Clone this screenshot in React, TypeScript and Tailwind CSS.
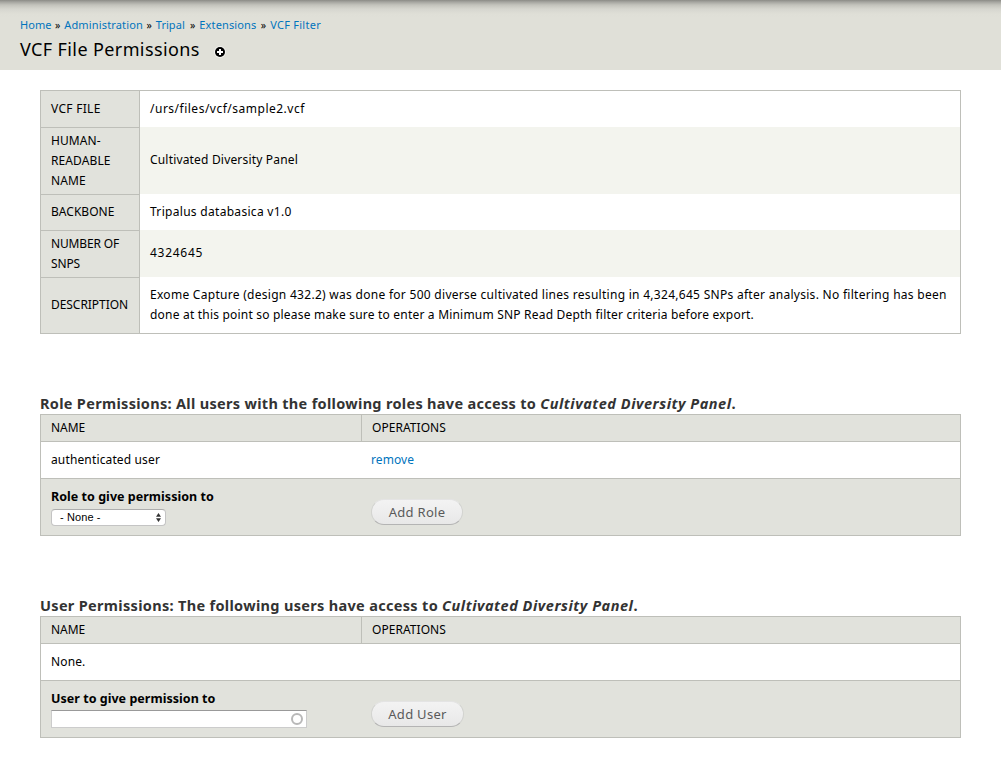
import type { ReactNode } from "react";

const crumbs = [
  { label: "Home", cls: "w-[31px]" },
  { label: "Administration", cls: "w-[78.4px] tracking-[0.16px]" },
  { label: "Tripal", cls: "w-[30.4px]" },
  { label: "Extensions", cls: "w-[57.6px] tracking-[0.13px]" },
  { label: "VCF Filter", cls: "w-[54px] tracking-[0.28px]" },
];

function Breadcrumb() {
  return (
    <nav className="flex h-[14px] items-center whitespace-nowrap text-[11px] leading-[14px] tracking-[0.05px]">
      {crumbs.map((c, i) => (
        <span key={c.label} className="flex">
          {i > 0 && <span className="w-[13.2px] text-center text-[10.5px] text-black">»</span>}
          <a className={`${c.cls} text-[#0074bd]`}>{c.label}</a>
        </span>
      ))}
    </nav>
  );
}

function InfoRow({ h, label, first, striped, children }: { h: string; label: ReactNode; first?: boolean; striped?: boolean; children: ReactNode }) {
  return (
    <div className={`flex ${h} ${striped ? "bg-[#f3f4ee]" : "bg-white"}`}>
      <div className={`flex w-[99px] shrink-0 items-center whitespace-nowrap border-r border-[#bebfb9] bg-[#e1e2dc] pl-[10px] ${first ? "" : "border-t pb-px"}`}>
        <div>{label}</div>
      </div>
      <div className={`flex items-center whitespace-nowrap pl-[10px] ${striped ? "pb-[2px]" : ""}`}>
        <div>{children}</div>
      </div>
    </div>
  );
}

function PermissionTable({ row, op, label, field, button }: { row: string; op?: string; label: ReactNode; field: ReactNode; button: ReactNode }) {
  return (
    <div className="h-[122px] w-[921px] border border-[#bebfb9] whitespace-nowrap">
      <div className="flex h-[27px] border-b border-[#bebfb9] bg-[#e1e2dc]">
        <div className="w-[321px] border-r border-[#bebfb9] pl-[10px] leading-[25px] tracking-[-0.05px]">NAME</div>
        <div className="pl-[10px] leading-[25px] tracking-[0.05px]">OPERATIONS</div>
      </div>
      <div className="flex h-[37px] border-b border-[#bebfb9] bg-white leading-[35px]">
        <div className="w-[320px] pl-[10px] tracking-[0.14px]">{row}</div>
        <div className="pl-[10px] tracking-[0.1px] text-[#0074bd]">{op}</div>
      </div>
      <div className="flex h-[56px] bg-[#e1e2dc]">
        <div className="w-[330px] pl-[10px] pt-[8px]">
          <div className="h-[20px] text-[12.5px] font-bold leading-[20px] tracking-[0.03px]">{label}</div>
          {field}
        </div>
        <div className="pt-[20px]">{button}</div>
      </div>
    </div>
  );
}

function PillButton({ children, w }: { children: ReactNode; w: string }) {
  return (
    <button className={`block h-[26px] ${w} rounded-full border border-[#e4e4e4] border-b-[#b4b4b4] border-l-[#d2d3d0] border-r-[#d2d3d0] bg-linear-to-b from-[#f3f3f3] to-[#e8e8e8] text-center text-[13px] leading-[23px] tracking-[0.3px] text-[#5a5a5a]`}>
      {children}
    </button>
  );
}

export default function App() {
  return (
    <div className="h-[780px] w-[1001px] overflow-hidden bg-white font-['Noto_Sans',sans-serif] text-[12px] leading-[20px] text-black">
      <header className="h-[70px] bg-[#e0e0d8] bg-[linear-gradient(to_bottom,#8b8b86_0px,#a5a5a0_2px,#c3c3bc_5px,#d6d6cf_9px,#dfdfd7_14px,#e0e0d8_18px)] pl-[20px] pt-[18px]">
        <Breadcrumb />
        <div className="flex h-[34px] items-center">
          <h1 className="w-[194px] whitespace-nowrap text-[18px] leading-[34px] tracking-[0.39px]">VCF File Permissions</h1>
          <svg className="mt-[5px]" width="12" height="12" viewBox="0 0 12 12">
            <circle cx="6" cy="6" r="6" fill="#f2f2ee" />
            <circle cx="6" cy="6" r="5" fill="#000" />
            <path d="M6 3v6M3 6h6" stroke="#fff" strokeWidth="2" />
          </svg>
        </div>
      </header>

      <main className="pl-[40px] pt-[20px]">
        <div className="w-[921px] border border-[#bebfb9] tracking-[0.3px]">
          <InfoRow first h="h-[36px]" label={<span className="tracking-[0.3px]">VCF FILE</span>}>
            <span className="tracking-[0.5px]">/urs/files/vcf/sample2.vcf</span>
          </InfoRow>
          <InfoRow striped h="h-[67px]" label={<span className="tracking-[0.1px]">HUMAN-<br />READABLE<br />NAME</span>}>
            <span className="tracking-[0.18px]">Cultivated Diversity Panel</span>
          </InfoRow>
          <InfoRow h="h-[36px]" label={<span className="tracking-[0.03px]">BACKBONE</span>}>Tripalus databasica v1.0</InfoRow>
          <InfoRow striped h="h-[47px]" label={<span className="tracking-[-0.15px]">NUMBER OF<br />SNPS</span>}>
            <span className="tracking-[0.72px]">4324645</span>
          </InfoRow>
          <InfoRow h="h-[56px]" label={<span className="tracking-[-0.05px]">DESCRIPTION</span>}>
            <div className="tracking-[0.285px]">Exome Capture (design 432.2) was done for 500 diverse cultivated lines resulting in 4,324,645 SNPs after analysis. No filtering has been</div>
            <div className="tracking-[0.2px]">done at this point so please make sure to enter a Minimum SNP Read Depth filter criteria before export.</div>
          </InfoRow>
        </div>

        <h2 className="mt-[60px] h-[20px] whitespace-nowrap text-[14.5px] font-bold leading-[18px] tracking-[0.31px] text-[#333]">
          Role Permissions: All users with the following roles have access to <em className="tracking-[0.53px]">Cultivated Diversity Panel</em>.
        </h2>
        <PermissionTable
          row="authenticated user"
          op="remove"
          label="Role to give permission to"
          field={
            <div className="mt-[2px] flex h-[17px] w-[115px] items-center justify-between rounded-[4px] border border-[#c4c4c4] border-t-[#adadad] bg-white pl-[8px] pr-[4px] font-['Liberation_Sans',sans-serif] text-[11px] leading-[15px] tracking-[0.1px]">
              <span>- None -</span>
              <svg width="5" height="9" viewBox="0 0 5 9" fill="#333">
                <path d="M2.5 0L5 3.8H0zM2.5 9L0 5.2H5z" />
              </svg>
            </div>
          }
          button={<PillButton w="w-[92px]">Add Role</PillButton>}
        />

        <h2 className="mt-[60px] h-[20px] whitespace-nowrap text-[14.5px] font-bold leading-[18px] tracking-[0.32px] text-[#333]">
          User Permissions: The following users have access to <em className="tracking-[0.53px]">Cultivated Diversity Panel</em>.
        </h2>
        <PermissionTable
          row="None."
          label="User to give permission to"
          field={
            <div className="mt-[1px] flex h-[18px] w-[256px] items-center justify-end border border-[#ccc] border-t-[#999] bg-white pr-[3px]">
              <svg width="12" height="12" viewBox="0 0 12 12">
                <circle cx="6" cy="6" r="5" fill="none" stroke="#b8b8b8" strokeWidth="2" />
              </svg>
            </div>
          }
          button={<PillButton w="w-[93px]">Add User</PillButton>}
        />
      </main>
    </div>
  );
}
